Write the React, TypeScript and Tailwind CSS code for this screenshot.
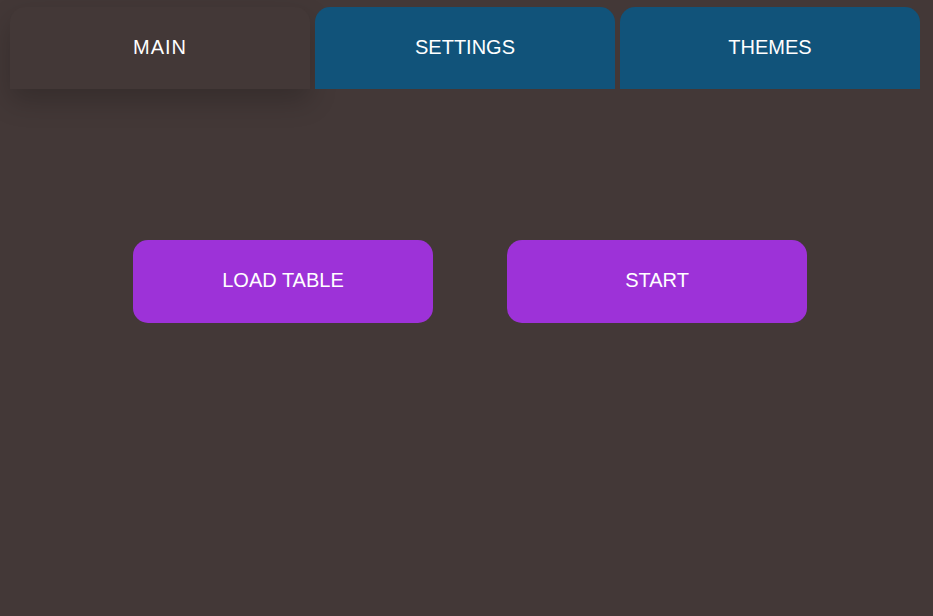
import React, { useState } from 'react';

const TABS = ['MAIN', 'SETTINGS', 'THEMES'];

export default function App() {
  const [active, setActive] = useState('MAIN');

  return (
    <div className="min-h-screen w-full bg-[#433837] font-['Liberation_Sans',Arial,sans-serif] text-white">
      {/* Tab bar */}
      <div className="flex gap-[5px] pl-[10px] pt-[7px]">
        {TABS.map((tab) => {
          const isActive = tab === active;
          return (
            <button
              key={tab}
              onClick={() => setActive(tab)}
              className={
                isActive
                  ? 'h-[82px] w-[300px] rounded-t-[15px] bg-[#433837] pb-[2px] text-[20px] tracking-[1px] shadow-[0_12px_28px_rgba(0,0,0,0.2)]'
                  : 'h-[82px] w-[300px] rounded-t-[15px] bg-[#11537a] pb-[2px] text-[20px]'
              }
            >
              {tab}
            </button>
          );
        })}
      </div>

      {/* Actions */}
      <div className="mt-[151px] flex gap-[74px] pl-[133px]">
        <button className="h-[83px] w-[300px] rounded-[15px] bg-[#9d32d8] pb-[3px] text-[20px]">LOAD TABLE</button>
        <button className="h-[83px] w-[300px] rounded-[15px] bg-[#9d32d8] pb-[3px] text-[20px]">START</button>
      </div>
    </div>
  );
}
